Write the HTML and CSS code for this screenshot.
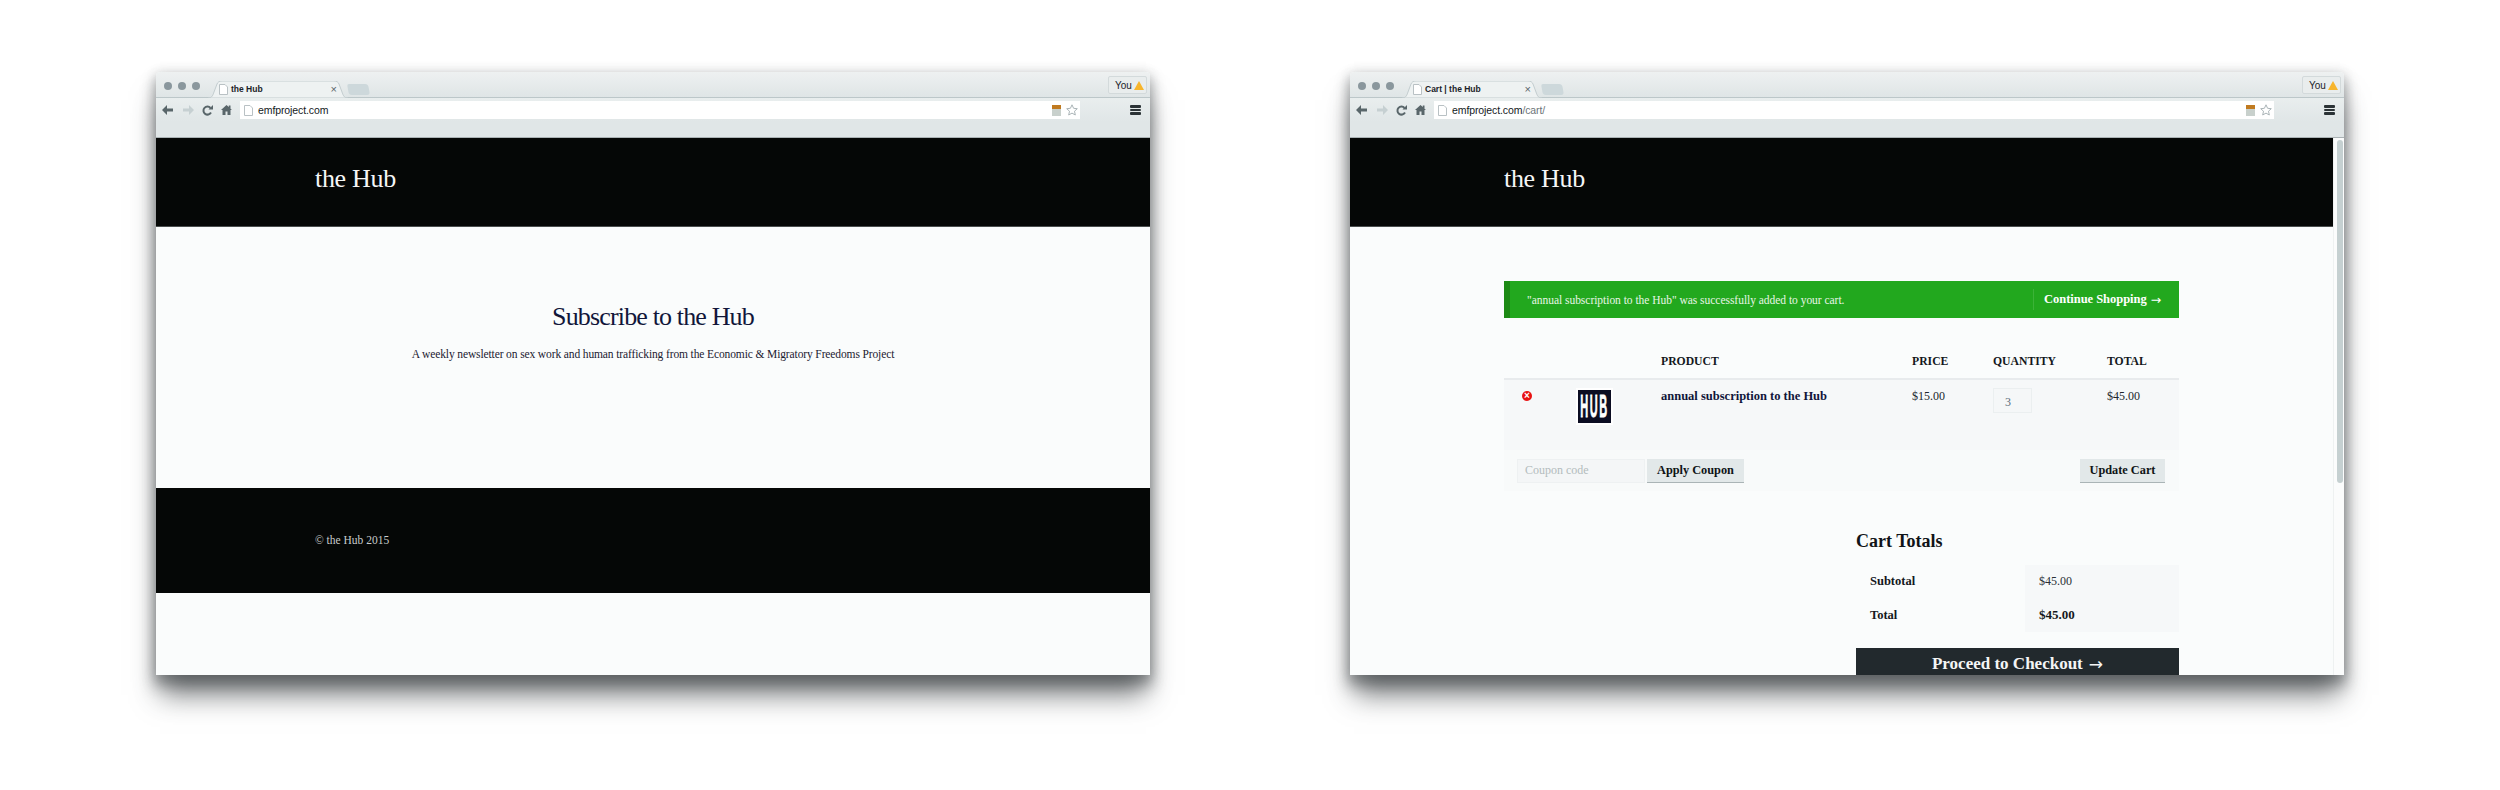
FILE: index.html
```html
<!DOCTYPE html>
<html lang="en">
<head>
<meta charset="utf-8">
<title>the Hub</title>
<link rel="stylesheet" href="styles.css">
</head>
<body>
<div class="window">
  <div class="strip">
    <div class="lights"><i></i><i></i><i></i></div>
    <div class="tab">
      <svg class="tab-shape" width="140" height="17" viewBox="0 0 140 17"><path d="M0 17C4 17 5 14 6 11L9 3C10 1 11 0 14 0H126C129 0 130 1 131 3L134 11C135 14 136 17 140 17Z" fill="#eef2f2" stroke="#c3cdcf"/></svg>
      <svg class="doc" width="9" height="11" viewBox="0 0 9 11"><path d="M.5.5H6L8.500 3V10.500H.5Z" fill="#fff" stroke="#b9c1c4"/></svg>
      <span class="tab-title">the Hub</span>
      <span class="tab-x">×</span>
    </div>
    <div class="newtab"></div>
    <div class="you"><span>You</span><svg width="10" height="9" viewBox="0 0 10 9"><path d="M5 0L10 9H0Z" fill="#f7b52c"/></svg></div>
  </div>
  <div class="toolbar">
    <svg class="nav" width="12" height="10" viewBox="0 0 12 10"><path d="M5 0L0 5L5 10V6.500H11V3.500H5Z" fill="#59666a"/></svg>
    <svg class="nav" width="12" height="10" viewBox="0 0 12 10"><path d="M7 0L12 5L7 10V6.500H1V3.500H7Z" fill="#c6d0d2"/></svg>
    <svg class="nav" width="11" height="11" viewBox="0 0 11 11"><path d="M9 7.500A4 4 0 1 1 8.500 3" fill="none" stroke="#59666a" stroke-width="2"/><path d="M6.500 4.500H11V0Z" fill="#59666a"/></svg>
    <svg class="nav" width="11" height="10" viewBox="0 0 11 10"><path d="M5.500 0L7.800 2.100V.5H9.500V3.700L11 5H9.500V10H6.500V6.500H4.500V10H1.500V5H0Z" fill="#59666a"/></svg>
    <div class="omni">
      <svg class="doc" width="9" height="11" viewBox="0 0 9 11"><path d="M.5.5H6L8.500 3V10.500H.5Z" fill="#fff" stroke="#b9c1c4"/></svg>
      <span class="url">emfproject.com</span>
      <svg class="ext" width="9" height="11" viewBox="0 0 9 11"><rect width="9" height="11" fill="#c8d0cc"/><rect width="9" height="4" fill="#c07a20"/></svg>
      <svg class="star" width="12" height="12" viewBox="0 0 12 12"><path d="M6 .8L7.600 4.300L11.300 4.700L8.500 7.200L9.300 11L6 9.100L2.700 11L3.500 7.200L.7 4.700L4.400 4.300Z" fill="#fff" stroke="#aab4b7"/></svg>
    </div>
    <div class="menu"><i></i><i></i><i></i></div>
  </div>
  <div class="page">
    <div class="content">
      <header class="site-head home-pad">the Hub</header>
      <main class="intro">
        <h1>Subscribe to the Hub</h1>
        <p>A weekly newsletter on sex work and human trafficking from the Economic &amp; Migratory Freedoms Project</p>
      </main>
      <footer class="site-foot">© the Hub 2015</footer>
    </div>
  </div>
</div>

<div class="window">
  <div class="strip">
    <div class="lights"><i></i><i></i><i></i></div>
    <div class="tab">
      <svg class="tab-shape" width="140" height="17" viewBox="0 0 140 17"><path d="M0 17C4 17 5 14 6 11L9 3C10 1 11 0 14 0H126C129 0 130 1 131 3L134 11C135 14 136 17 140 17Z" fill="#eef2f2" stroke="#c3cdcf"/></svg>
      <svg class="doc" width="9" height="11" viewBox="0 0 9 11"><path d="M.5.5H6L8.500 3V10.500H.5Z" fill="#fff" stroke="#b9c1c4"/></svg>
      <span class="tab-title">Cart | the Hub</span>
      <span class="tab-x">×</span>
    </div>
    <div class="newtab"></div>
    <div class="you"><span>You</span><svg width="10" height="9" viewBox="0 0 10 9"><path d="M5 0L10 9H0Z" fill="#f7b52c"/></svg></div>
  </div>
  <div class="toolbar">
    <svg class="nav" width="12" height="10" viewBox="0 0 12 10"><path d="M5 0L0 5L5 10V6.500H11V3.500H5Z" fill="#59666a"/></svg>
    <svg class="nav" width="12" height="10" viewBox="0 0 12 10"><path d="M7 0L12 5L7 10V6.500H1V3.500H7Z" fill="#c6d0d2"/></svg>
    <svg class="nav" width="11" height="11" viewBox="0 0 11 11"><path d="M9 7.500A4 4 0 1 1 8.500 3" fill="none" stroke="#59666a" stroke-width="2"/><path d="M6.500 4.500H11V0Z" fill="#59666a"/></svg>
    <svg class="nav" width="11" height="10" viewBox="0 0 11 10"><path d="M5.500 0L7.800 2.100V.5H9.500V3.700L11 5H9.500V10H6.500V6.500H4.500V10H1.500V5H0Z" fill="#59666a"/></svg>
    <div class="omni">
      <svg class="doc" width="9" height="11" viewBox="0 0 9 11"><path d="M.5.5H6L8.500 3V10.500H.5Z" fill="#fff" stroke="#b9c1c4"/></svg>
      <span class="url">emfproject.com<span class="url-path">/cart/</span></span>
      <svg class="ext" width="9" height="11" viewBox="0 0 9 11"><rect width="9" height="11" fill="#c8d0cc"/><rect width="9" height="4" fill="#c07a20"/></svg>
      <svg class="star" width="12" height="12" viewBox="0 0 12 12"><path d="M6 .8L7.600 4.300L11.300 4.700L8.500 7.200L9.300 11L6 9.100L2.700 11L3.500 7.200L.7 4.700L4.400 4.300Z" fill="#fff" stroke="#aab4b7"/></svg>
    </div>
    <div class="menu"><i></i><i></i><i></i></div>
  </div>
  <div class="page">
    <div class="content">
      <header class="site-head cart-pad">the Hub</header>
      <main class="cart">
        <div class="notice">
          <span class="notice-text">"annual subscription to the Hub" was successfully added to your cart.</span>
          <a class="notice-link">Continue Shopping <span class="arrow">→</span></a>
        </div>
        <div class="grid thead">
          <span></span><span></span><span>PRODUCT</span><span>PRICE</span><span>QUANTITY</span><span>TOTAL</span>
        </div>
        <div class="grid item">
          <span class="remove">×</span>
          <span class="thumb"><b>HUB</b></span>
          <a class="product">annual subscription to the Hub</a>
          <span>$15.00</span>
          <span class="qty">3</span>
          <span>$45.00</span>
        </div>
        <div class="actions">
          <span class="coupon">Coupon code</span>
          <button class="btn">Apply Coupon</button>
          <button class="btn update">Update Cart</button>
        </div>
        <section class="totals">
          <h2>Cart Totals</h2>
          <div class="t-row"><span class="t-label">Subtotal</span><span class="t-val">$45.00</span></div>
          <div class="t-row"><span class="t-label">Total</span><span class="t-val strong">$45.00</span></div>
          <a class="checkout">Proceed to Checkout <span class="arrow">→</span></a>
        </section>
      </main>
    </div>
    <div class="scrollbar"><i></i></div>
  </div>
</div>
</body>
</html>
```
FILE: styles.css
```css
* { box-sizing: border-box; }
html, body { margin: 0; height: 100%; overflow: hidden; background: #fff; }
body {
  display: flex;
  gap: 200px;
  padding: 72px 0 0 156px;
  font-family: "Liberation Serif", "DejaVu Serif", serif;
  color: #11182a;
}
.window {
  width: 994px;
  height: 603px;
  display: flex;
  flex-direction: column;
  border-radius: 4px 4px 0 0;
  background: #fafcfc;
  box-shadow: 0 24px 26px -4px rgba(45, 50, 53, .62), 0 8px 14px 2px rgba(50, 55, 58, .4), 0 0 12px rgba(60, 65, 68, .12);
}
.strip {
  height: 26px;
  flex: none;
  display: flex;
  align-items: flex-end;
  padding: 0 3px 0 7px;
  background: linear-gradient(#eef1f1, #dfe5e6);
  border-radius: 4px 4px 0 0;
  border-bottom: 1px solid #bcc7c9;
}
.lights { display: flex; gap: 6px; align-self: flex-start; padding: 10px 0 0 1px; margin-right: 8px; }
.lights i { width: 8px; height: 8px; border-radius: 50%; background: #8a979d; }
.tab {
  position: relative;
  width: 140px;
  height: 17px;
  display: flex;
  align-items: center;
  padding: 0 11px 1px 11px;
  font: 600 8.500px "Liberation Sans", sans-serif;
  color: #1a2228;
  margin-bottom: -1px;
}
.tab-shape { position: absolute; left: 0; top: 0; }
.doc { position: relative; flex: none; }
.tab-title { position: relative; margin-left: 3px; flex: 1; }
.tab-x { position: relative; font-size: 11px; font-weight: 400; color: #59666a; }
.newtab {
  width: 21px;
  height: 11px;
  margin: 0 0 2px 0;
  background: #cdd8db;
  border-radius: 2px 3px 3px 3px;
  transform: skewX(10deg);
}
.you {
  margin: 0 0 3px auto;
  width: 39px;
  height: 18px;
  display: flex;
  align-items: center;
  gap: 2px;
  padding-left: 6px;
  font: 10px "Liberation Sans", sans-serif;
  color: #1c2428;
  background: #e9eded;
  border: 1px solid #d3dadb;
  border-radius: 2px;
}
.toolbar {
  height: 40px;
  flex: none;
  display: flex;
  align-items: flex-start;
  padding: 3px 7px 0 6px;
  gap: 8px;
  background: linear-gradient(#e9eeee, #e0e6e7 60%);
  border-bottom: 1px solid #aab2b4;
}
.nav { flex: none; margin-top: 4px; }
.omni {
  flex: none;
  width: 840px;
  height: 18px;
  margin-left: 0;
  display: flex;
  align-items: center;
  padding: 0 2px 0 4px;
  background: #fff;
  font: 10.500px "Liberation Sans", sans-serif;
  letter-spacing: -.1px;
  color: #14191c;
}
.url { margin-left: 5px; flex: 1; }
.url-path { color: #6c7579; }
.ext { margin-right: 5px; }
.menu { margin-left: auto; margin-right: 2px; display: flex; flex-direction: column; gap: 1px; padding-top: 4px; }
.menu i { width: 11px; height: 2.500px; background: #2b3336; border-radius: 1px; }

.page { flex: 1; min-height: 0; display: flex; overflow: hidden; }
.content { flex: 1; min-width: 0; }
.site-head {
  height: 89px;
  display: flex;
  align-items: center;
  padding-bottom: 7px;
  background: #050706;
  border-bottom: 1px solid #4a4e4e;
  color: #f5f6f6;
  font-size: 26px;
  letter-spacing: -.3px;
}
.home-pad { padding-left: 159px; }
.cart-pad { padding-left: 154px; }
.intro { height: 261px; padding: 76px 0 0; text-align: center; }
.intro h1 { margin: 0; font-size: 26px; font-weight: 400; line-height: 28px; letter-spacing: -.85px; color: #11163a; }
.intro p { margin: 15px 0 0; font-size: 11.500px; line-height: 16px; letter-spacing: -.12px; color: #1a2030; }
.site-foot {
  height: 105px;
  display: flex;
  align-items: center;
  padding: 0 0 2px 159px;
  background: #050706;
  color: #c8cccc;
  font-size: 11.500px;
}

.cart { width: 675px; margin: 54px 0 0 154px; font-size: 12px; }
.notice {
  height: 37px;
  display: flex;
  align-items: center;
  padding-left: 17px;
  background: #22a81e;
  border-left: 6px solid #1c8a14;
  color: #e8f5e6;
  font-size: 11.500px;
  letter-spacing: -.03px;
}
.notice-text { flex: 1; }
.notice-link {
  height: 21px;
  width: 146px;
  display: flex;
  align-items: center;
  gap: 4px;
  padding-left: 10px;
  border-left: 1px solid #3cb338;
  color: #fff;
  font-size: 12.500px;
  font-weight: 700;
}
.arrow { font-family: "DejaVu Sans", sans-serif; font-weight: 400; }
.grid { display: grid; grid-template-columns: 74px 83px 251px 81px 114px 72px; }
.thead {
  margin-top: 29px;
  height: 33px;
  align-items: center;
  padding-bottom: 2px;
  border-bottom: 2px solid #e8ebed;
  font-weight: 700;
  font-size: 11.700px;
  color: #14181c;
}
.item { height: 70px; background: #f6f8f9; padding-top: 10px; color: #20262c; line-height: 12px; }
.remove {
  width: 10px;
  height: 10px;
  margin: 1px 0 0 18px;
  border-radius: 50%;
  background: #e81212;
  color: #fff;
  font: 700 10px/10px "Liberation Sans", sans-serif;
  text-align: center;
}
.thumb {
  width: 33px;
  height: 33px;
  display: flex;
  align-items: center;
  justify-content: center;
  background: #0b0d22;
  outline: 2px solid #fff;
}
.thumb b {
  font: 700 11px/11px "Liberation Sans", sans-serif;
  letter-spacing: 1.500px;
  color: #fff;
  -webkit-text-stroke: .3px #fff;
  transform: scaleY(2.900);
}
.product { font-weight: 700; font-size: 12.500px; color: #11163a; }
.qty {
  width: 39px;
  height: 25px;
  margin-top: -2px;
  padding: 7px 0 0 11px;
  background: #f5f7f8;
  border: 1px solid #ebeff0;
  color: #5d6d7a;
}
.actions {
  height: 41px;
  display: flex;
  align-items: center;
  gap: 2px;
  padding: 0 14px 0 13px;
  background: #f8fafa;
}
.coupon {
  width: 128px;
  height: 24px;
  display: flex;
  align-items: center;
  padding-left: 7px;
  background: #f4f6f7;
  border: 1px solid #eef1f2;
  color: #b3bcbd;
}
.btn {
  height: 24px;
  padding: 0;
  width: 97px;
  border: 0;
  border-bottom: 1px solid #aab4b6;
  background: #e2e8e9;
  color: #0f1416;
  font: 700 12.300px "Liberation Serif", serif;
}
.update { width: 85px; margin-left: auto; }
.totals { width: 323px; margin-left: auto; }
.totals h2 { margin: 39px 0 13px; font-size: 18px; line-height: 22px; color: #101418; }
.t-row { display: flex; height: 33.500px; align-items: center; }
.t-label { width: 169px; padding-left: 14px; font-weight: 700; font-size: 12.500px; color: #14181c; }
.t-val { flex: 1; align-self: stretch; display: flex; align-items: center; padding-left: 14px; background: #f6f8f9; color: #2a3036; }
.strong { font-weight: 700; font-size: 13px; color: #14181c; }
.checkout {
  margin-top: 16px;
  height: 40px;
  display: flex;
  justify-content: center;
  align-items: flex-start;
  gap: 6px;
  padding-top: 6px;
  background: #22292d;
  color: #f4f5f5;
  font-size: 17px;
  font-weight: 700;
}
.scrollbar { width: 11px; flex: none; padding: 2px 2px 0 3px; border-left: 1px solid #eef1f1; background: #fbfcfc; }
.scrollbar i { display: block; width: 6px; height: 343px; border-radius: 3px; background: #c5d0d1; }
```
